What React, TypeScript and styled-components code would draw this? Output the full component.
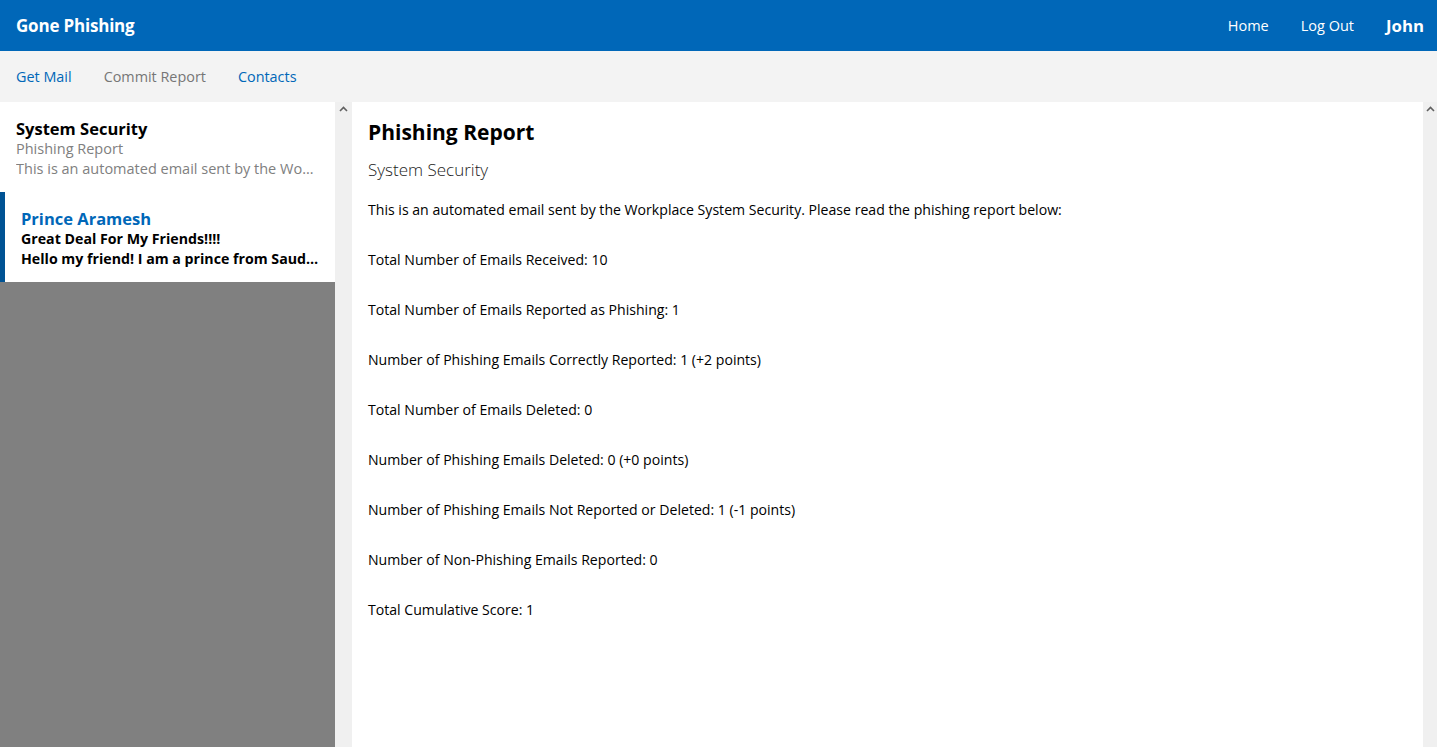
import React from "react";
import styled, { createGlobalStyle } from "styled-components";

const Global = createGlobalStyle`
  html, body { margin: 0; padding: 0; height: 100%; overflow: hidden; }
  body { font-family: "Segoe UI", "Open Sans", sans-serif; color: #000; background: #fff; }
  #root { height: 100%; }
  * { box-sizing: border-box; }
`;

const Page = styled.div`
  display: flex;
  flex-direction: column;
  height: 747px;
`;

const Header = styled.header`
  height: 51px;
  background: #0067b8;
  display: flex;
  align-items: center;
  justify-content: space-between;
  padding: 0 13px 0 16px;
  color: #fff;
`;

const Brand = styled.div`
  font-size: 17px;
  font-weight: 700;
  letter-spacing: -0.2px;
`;

const TopNav = styled.nav`
  display: flex;
  align-items: center;
  gap: 32px;
`;

const TopLink = styled.span<{ $strong?: boolean }>`
  font-size: ${(p) => (p.$strong ? "16.8px" : "14.5px")};
  font-weight: ${(p) => (p.$strong ? 700 : 400)};
`;

const SubNav = styled.nav`
  height: 51px;
  background: #f3f3f3;
  display: flex;
  align-items: center;
  gap: 32px;
  padding: 0 16px;
`;

const SubLink = styled.span<{ $muted?: boolean }>`
  font-size: 14.4px;
  color: ${(p) => (p.$muted ? "#767676" : "#0067b8")};
`;

const Body = styled.div`
  flex: 1;
  display: flex;
  min-height: 0;
`;

const ListPane = styled.aside`
  width: 335px;
  background: #808080;
  display: flex;
  flex-direction: column;
`;

const MailItem = styled.div<{ $selected?: boolean }>`
  height: 90px;
  background: #fff;
  padding: 16px 16px 0 16px;
  border-left: ${(p) => (p.$selected ? "5px solid #005394" : "0")};
  display: flex;
  flex-direction: column;
`;

const Sender = styled.div<{ $unread?: boolean }>`
  font-size: 16.5px;
  font-weight: 700;
  line-height: 21px;
  color: ${(p) => (p.$unread ? "#0067b8" : "#000")};
`;

const Line = styled.div<{ $unread?: boolean }>`
  font-size: ${(p) => (p.$unread ? "14.2px" : "14.5px")};
  line-height: 19.5px;
  font-weight: ${(p) => (p.$unread ? 700 : 400)};
  color: ${(p) => (p.$unread ? "#000" : "#808080")};
  white-space: nowrap;
  overflow: hidden;
  text-overflow: ellipsis;
`;

const Scrollbar = styled.div<{ $w: number }>`
  width: ${(p) => p.$w}px;
  background: #f0f0f0;
  display: flex;
  justify-content: center;
  padding-top: 4px;
  flex-shrink: 0;
`;

const Reader = styled.main`
  flex: 1;
  background: #fff;
  padding: 15px 16px;
`;

const Title = styled.h1`
  margin: 0;
  font-size: 21px;
  font-weight: 700;
  line-height: 30px;
`;

const From = styled.div`
  font-size: 17px;
  font-weight: 300;
  color: #222;
  margin-top: 11px;
  line-height: 24px;
`;

const Paras = styled.div`
  margin-top: 18px;
  display: flex;
  flex-direction: column;
  gap: 30px;
`;

const Para = styled.p`
  margin: 0;
  font-size: 14.1px;
  line-height: 20px;
`;

const Chevron = () => (
  <svg width="9" height="6" viewBox="0 0 9 6">
    <path d="M1 5 L4.5 1.5 L8 5" fill="none" stroke="#606060" strokeWidth="1.6" />
  </svg>
);

const lines = [
  "This is an automated email sent by the Workplace System Security. Please read the phishing report below:",
  "Total Number of Emails Received: 10",
  "Total Number of Emails Reported as Phishing: 1",
  "Number of Phishing Emails Correctly Reported: 1 (+2 points)",
  "Total Number of Emails Deleted: 0",
  "Number of Phishing Emails Deleted: 0 (+0 points)",
  "Number of Phishing Emails Not Reported or Deleted: 1 (-1 points)",
  "Number of Non-Phishing Emails Reported: 0",
  "Total Cumulative Score: 1",
];

export default function App() {
  return (
    <>
      <Global />
      <Page>
        <Header>
          <Brand>Gone Phishing</Brand>
          <TopNav>
            <TopLink>Home</TopLink>
            <TopLink>Log Out</TopLink>
            <TopLink $strong>John</TopLink>
          </TopNav>
        </Header>
        <SubNav>
          <SubLink>Get Mail</SubLink>
          <SubLink $muted>Commit Report</SubLink>
          <SubLink>Contacts</SubLink>
        </SubNav>
        <Body>
          <ListPane>
            <MailItem>
              <Sender>System Security</Sender>
              <Line>Phishing Report</Line>
              <Line>This is an automated email sent by the Workplace System Security. Please read the phishing report below:</Line>
            </MailItem>
            <MailItem $selected>
              <Sender $unread>Prince Aramesh</Sender>
              <Line $unread>Great Deal For My Friends!!!!</Line>
              <Line $unread>Hello my friend! I am a prince from Saudi Arabia and I have a great deal for you.</Line>
            </MailItem>
          </ListPane>
          <Scrollbar $w={17}>
            <Chevron />
          </Scrollbar>
          <Reader>
            <Title>Phishing Report</Title>
            <From>System Security</From>
            <Paras>
              {lines.map((l) => (
                <Para key={l}>{l}</Para>
              ))}
            </Paras>
          </Reader>
          <Scrollbar $w={14}>
            <Chevron />
          </Scrollbar>
        </Body>
      </Page>
    </>
  );
}
